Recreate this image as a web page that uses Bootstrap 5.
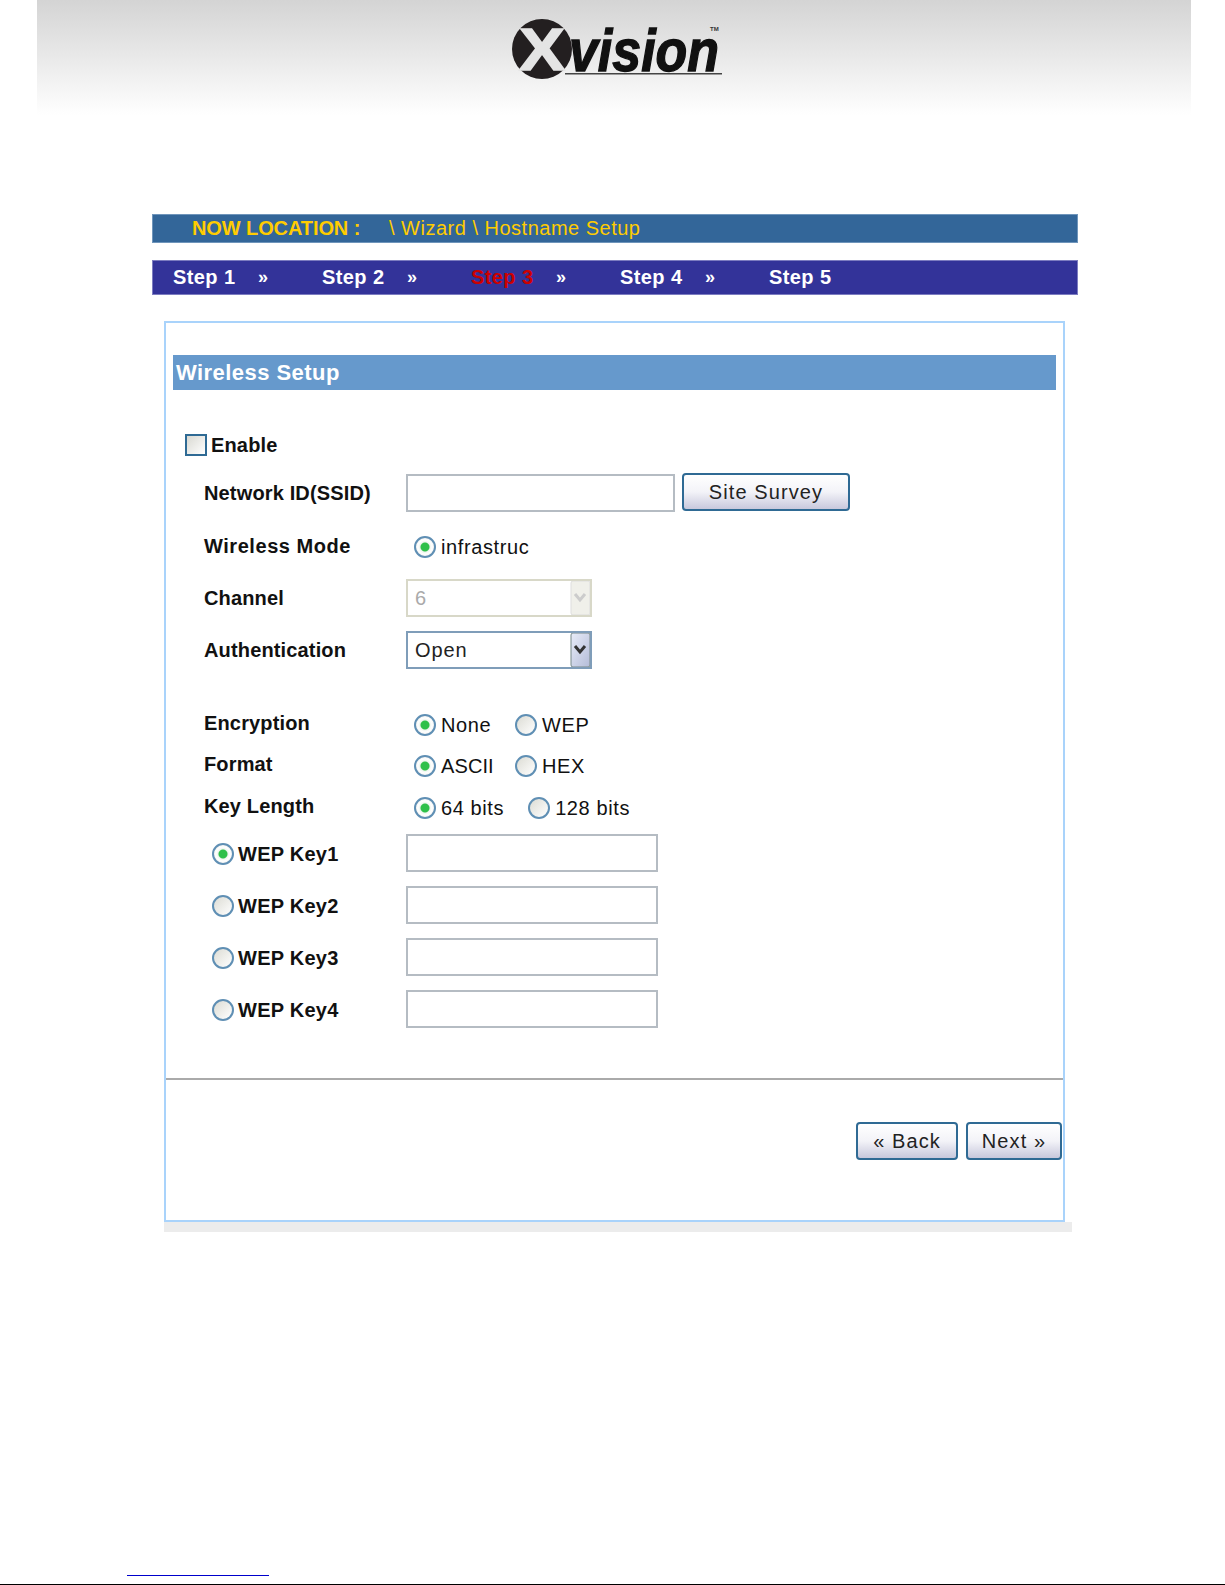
<!DOCTYPE html>
<html lang="en">
<head>
<meta charset="utf-8">
<title>Wireless Setup</title>
<link href="https://cdn.jsdelivr.net/npm/bootstrap@5.3.0/dist/css/bootstrap.min.css" rel="stylesheet">
<style>
html,body{margin:0;background:#fff;height:1585px;overflow:hidden}
body{font-family:"Liberation Sans",Arial,sans-serif;color:#111}
.top-band{height:115px;margin:0 34px 0 37px;padding-top:18px;background:linear-gradient(#d4d4d4,#e9e9e9 50%,#fff)}
.brand-logo{display:block;margin-left:474px;overflow:visible}
.wrap{margin:99px 147px 0 152px}
.loc-bar{height:29px;background:#336699;border:1px solid #6f95bb;color:#ffcc00;font-size:20px;line-height:27px;padding-left:39px}
.loc-bar b{letter-spacing:-.1px;display:inline-block;width:197px}
.loc-bar span{letter-spacing:.5px}
.step-bar{height:35px;margin-top:17px;background:#333399;border:1px solid #7c7cc0;color:#fff;font-weight:700;font-size:20px;line-height:33px;padding-left:20px}
.step-item{width:149px;display:flex}
.step-item span{display:inline-block;width:85px;letter-spacing:.4px}
.step-item i{font-style:normal;font-size:18px}
.step-now{color:#cc0000}
.panel-box{margin:26px 0 0 12px;width:901px;height:901px;border:2px solid #a9d3fb;background:#fff}
.panel-title{margin:32px 7px 0 7px;height:35px;background:#6699cc;color:#fff;font-weight:700;font-size:22px;line-height:35px;padding-left:3px;letter-spacing:.45px}
.form-area{height:655px;margin-top:35px;display:grid;grid-template-columns:240px 1fr;grid-template-rows:49px 53px 52px 52px 74px 41px 42px 47px 52px 52px 52px 38px;border-bottom:2px solid #aaa}
.cell{height:38px;display:flex;align-items:center}
.lbl{font-weight:700;font-size:20px;letter-spacing:.15px;padding-left:38px}
.lbl-en{grid-column:1 / 3;padding-left:19px;padding-top:1px}
.lbl-key{padding-left:46px;letter-spacing:.25px}
.lbl-up{padding-bottom:2px}
.lbl-wide{letter-spacing:.55px}
.val{font-size:20px;letter-spacing:.6px}
.rd,.rd.form-check-input{appearance:none;width:22px;height:22px;margin:0;border:2px solid #5f8fb4;border-radius:50%;background:linear-gradient(135deg,#dcdcd4,#fff);flex:none;float:none}
.rd.form-check-input:checked{background:radial-gradient(circle,#2fc04a 0 4px,#eef5ee 5px,#fff 7px,#e2e2dc);border-color:#5f8fb4}
.rd-group{display:flex;align-items:center;padding-left:8px;padding-top:2px}
.rd-text{margin-left:5px}
.rd-slot{width:74px;margin-right:0}
.rd-tight{letter-spacing:.1px}
.rd.rd-gap.form-check-input{margin-left:24px}
.rd.rd-tail.form-check-input{margin-right:4px}
.cb.form-check-input{appearance:none;width:22px;height:22px;margin:0 4px 0 0;border:2px solid #2f6a94;border-radius:0;background:linear-gradient(135deg,#d9d9d2,#fff);float:none}
.txt.form-control{height:38px;border:2px solid #b5bcc3;border-radius:0;padding:0 8px;font-size:20px}
.txt-ssid.form-control{width:269px}
.txt-key.form-control{width:252px;margin-top:-2px}
.sel.form-select{width:186px;height:38px;border-radius:0;border:2px solid #7f9db9;padding:0 7px;font-size:20px;color:#222;letter-spacing:.9px;background-position:right 0 center;background-size:20px 34px;background-image:url("data:image/svg+xml,%3Csvg xmlns='http://www.w3.org/2000/svg' viewBox='0 0 20 34'%3E%3Cdefs%3E%3ClinearGradient id='g' x2='1' y2='1'%3E%3Cstop stop-color='%23e8ecf8'/%3E%3Cstop offset='1' stop-color='%23b4bcd8'/%3E%3C/linearGradient%3E%3C/defs%3E%3Crect x='1' y='0' width='19' height='34' rx='2' fill='url(%23g)' stroke='%23788' /%3E%3Cpath d='M5 13l5 6 5-6' fill='none' stroke='%23333' stroke-width='3'/%3E%3C/svg%3E")}
.sel.form-select:disabled{background-color:#fff;color:#aaa;border-color:#d8d8c8;background-image:url("data:image/svg+xml,%3Csvg xmlns='http://www.w3.org/2000/svg' viewBox='0 0 20 34'%3E%3Crect x='1' y='0' width='19' height='34' rx='2' fill='%23f0f0ea' stroke='%23ddd'/%3E%3Cpath d='M5 13l5 6 5-6' fill='none' stroke='%23ccc' stroke-width='3'/%3E%3C/svg%3E")}
.xbtn.btn{height:38px;padding:0;border:2px solid #2f6a94;border-radius:4px;background:linear-gradient(#fff,#f3f3f8 50%,#c8c8dc);color:#222;font-size:20px;line-height:32px;letter-spacing:1.1px}
.btn-site{width:168px;margin:-2px 0 0 7px}
.btn-back{width:102px}
.btn-next{width:96px}
.foot-row{padding:42px 1px 0 0}
.under-shade{margin-left:12px;width:908px;height:10px;background:#ececec}
.blue-rule{margin:343px 0 0 127px;width:142px;height:1px;background:#0000cc}
.black-rule{margin-top:8px;height:1px;background:#000}
</style>
</head>
<body>
<header class="top-band">
<svg class="brand-logo" width="216" height="66" viewBox="0 0 216 66" role="img" aria-label="Xvision">
<circle cx="31" cy="31" r="30" fill="#231f20"/>
<text x="8" y="52" font-family="Liberation Sans" font-weight="700" font-size="60" fill="#e4e4e4" stroke="#e4e4e4" stroke-width="1.5" textLength="46" lengthAdjust="spacingAndGlyphs">X</text>
<text x="58" y="53" font-family="Liberation Sans" font-weight="700" font-style="italic" font-size="60" fill="#111" stroke="#111" stroke-width="1.4" textLength="150" lengthAdjust="spacingAndGlyphs">vision</text>
<rect x="54" y="55" width="157" height="1.5" fill="#444"/>
<text x="199" y="13" font-family="Liberation Sans" font-weight="700" font-size="6" fill="#333">TM</text>
</svg>
</header>
<div class="wrap">
<div class="loc-bar"><b>NOW LOCATION :</b><span>\ Wizard \ Hostname Setup</span></div>
<div class="step-bar d-flex">
<div class="step-item"><span>Step 1</span><i>»</i></div>
<div class="step-item"><span>Step 2</span><i>»</i></div>
<div class="step-item"><span class="step-now">Step 3</span><i>»</i></div>
<div class="step-item"><span>Step 4</span><i>»</i></div>
<div class="step-item"><span>Step 5</span></div>
</div>
<main class="panel-box">
<div class="panel-title">Wireless Setup</div>
<form class="form-area">
<label class="cell lbl lbl-en"><input type="checkbox" class="form-check-input cb">Enable</label>
<div class="cell lbl">Network ID(SSID)</div>
<div class="cell"><input type="text" class="form-control txt txt-ssid"><button type="button" class="btn xbtn btn-site">Site Survey</button></div>
<div class="cell lbl lbl-wide">Wireless Mode</div>
<div class="cell val rd-group"><input type="radio" class="form-check-input rd" checked><span class="rd-text">infrastruc</span></div>
<div class="cell lbl">Channel</div>
<div class="cell"><select class="form-select sel" disabled><option>6</option></select></div>
<div class="cell lbl">Authentication</div>
<div class="cell"><select class="form-select sel"><option>Open</option></select></div>
<div class="cell lbl lbl-up">Encryption</div>
<div class="cell val rd-group"><input type="radio" name="enc" class="form-check-input rd" checked><span class="rd-text rd-slot">None</span><input type="radio" name="enc" class="form-check-input rd"><span class="rd-text">WEP</span></div>
<div class="cell lbl lbl-up">Format</div>
<div class="cell val rd-group"><input type="radio" name="fmt" class="form-check-input rd" checked><span class="rd-text rd-slot rd-tight">ASCII</span><input type="radio" name="fmt" class="form-check-input rd"><span class="rd-text">HEX</span></div>
<div class="cell lbl lbl-up">Key Length</div>
<div class="cell val rd-group"><input type="radio" name="len" class="form-check-input rd" checked><span class="rd-text">64 bits</span><input type="radio" name="len" class="form-check-input rd rd-gap"><span class="rd-text">128 bits</span></div>
<label class="cell lbl lbl-key"><input type="radio" name="key" class="form-check-input rd rd-tail" checked>WEP Key1</label>
<div class="cell"><input type="text" class="form-control txt txt-key"></div>
<label class="cell lbl lbl-key"><input type="radio" name="key" class="form-check-input rd rd-tail">WEP Key2</label>
<div class="cell"><input type="text" class="form-control txt txt-key"></div>
<label class="cell lbl lbl-key"><input type="radio" name="key" class="form-check-input rd rd-tail">WEP Key3</label>
<div class="cell"><input type="text" class="form-control txt txt-key"></div>
<label class="cell lbl lbl-key"><input type="radio" name="key" class="form-check-input rd rd-tail">WEP Key4</label>
<div class="cell"><input type="text" class="form-control txt txt-key"></div>
</form>
<div class="foot-row d-flex justify-content-end gap-2">
<button type="button" class="btn xbtn btn-back">« Back</button>
<button type="button" class="btn xbtn btn-next">Next »</button>
</div>
</main>
<div class="under-shade"></div>
</div>
<div class="blue-rule"></div>
<div class="black-rule"></div>
<script src="https://cdn.jsdelivr.net/npm/bootstrap@5.3.0/dist/js/bootstrap.bundle.min.js"></script>
</body>
</html>
